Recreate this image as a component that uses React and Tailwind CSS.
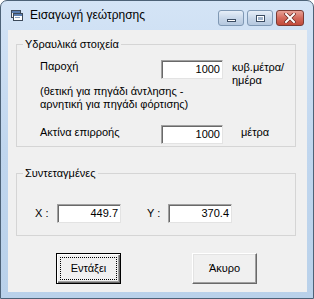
import React from 'react';

// Sunken edit box, classic Windows look
const Field = ({ value, w }) => (
  <div
    className={`${w} h-[19px] shrink-0 flex items-center justify-end pr-[2px] bg-white border border-t-[#a0a0a0] border-l-[#a0a0a0] border-b-[#e3e3e3] border-r-[#e3e3e3] shadow-[inset_1px_1px_0_#696969] text-[11px] leading-none`}
  >
    {value}
  </div>
);

const CaptionButton = ({ children, close }) => (
  <div
    className={
      close
        ? 'w-[28px] h-[16px] rounded-[3px] border border-[#7a3a33] bg-gradient-to-b from-[#e7a196] via-[#d46a5c] to-[#c14a3a] flex items-center justify-center'
        : 'w-[26px] h-[16px] rounded-[3px] border border-[#7f98b4] bg-gradient-to-b from-[#e6eef8] via-[#c9d8ea] to-[#b5c8df] flex items-center justify-center'
    }
  >
    {children}
  </div>
);

export default function App() {
  return (
    <div className="w-[314px] h-[299px] flex flex-col rounded-t-[7px] border border-[#4d6277] bg-gradient-to-b from-[#d4e4f6] via-[#c0d6ee] to-[#b9d1ea] font-['Liberation_Sans',sans-serif] text-black">
      {/* title bar */}
      <div className="h-[29px] shrink-0 flex items-start pl-[10px] pr-[9px]">
        <div className="flex items-center gap-[7px] h-[28px]">
          <svg width="12" height="11" viewBox="0 0 12 11">
            <rect x="0.5" y="0.5" width="9" height="7" fill="#f4f4f4" stroke="#3d4a5a" />
            <rect x="1" y="1" width="8" height="2" fill="#5a7eb0" />
            <rect x="2.5" y="3.5" width="9" height="7" fill="#ffffff" stroke="#3d4a5a" />
            <rect x="3" y="4" width="8" height="2" fill="#5a7eb0" />
            <rect x="4" y="7" width="5" height="1" fill="#8da3bd" />
          </svg>
          <span className="text-[12px] leading-none text-black">Εισαγωγή γεώτρησης</span>
        </div>
        <div className="ml-auto flex gap-[3px] mt-[9px]">
          <CaptionButton>
            <div className="w-[9px] h-[3px] mt-[5px] bg-white border border-[#3c4d63]" />
          </CaptionButton>
          <CaptionButton>
            <div className="w-[9px] h-[7px] bg-white border border-[#3c4d63] flex items-center justify-center">
              <div className="w-[5px] h-[3px] bg-[#9fb3cb]" />
            </div>
          </CaptionButton>
          <CaptionButton close>
            <svg width="12" height="10" viewBox="0 0 12 10">
              <path d="M2 1 L10 9 M10 1 L2 9" stroke="#6b2b24" strokeWidth="3.4" strokeLinecap="square" />
              <path d="M2 1 L10 9 M10 1 L2 9" stroke="#ffffff" strokeWidth="2" strokeLinecap="square" />
            </svg>
          </CaptionButton>
        </div>
      </div>

      {/* client area */}
      <div className="flex-1 ml-[7px] mr-[6px] mb-[6px] bg-[#f0f0f0] flex flex-col text-[11px] leading-[13px]">
        <fieldset className="ml-[8px] mt-[8px] w-[280px] h-[109px] border border-[#d5d5d5] flex flex-col">
          <legend className="ml-[6px] px-[2px] leading-[13px]">Υδραυλικά στοιχεία</legend>
          <div className="mt-[9px] h-[19px] flex items-start pl-[23px]">
            <span className="w-[121px] shrink-0">Παροχή</span>
            <Field value="1000" w="w-[62px]" />
            <span className="ml-[9px] mt-[1px] whitespace-nowrap">
              κυβ.μέτρα/
              <br />
              ημέρα
            </span>
          </div>
          <p className="mt-[6px] pl-[23px]">
            (θετική για πηγάδι άντλησης -
            <br />
            αρνητική για πηγάδι φόρτισης)
          </p>
          <div className="mt-[14px] h-[19px] flex items-start pl-[23px]">
            <span className="w-[121px] shrink-0 mt-[1px]">Ακτίνα επιρροής</span>
            <Field value="1000" w="w-[62px]" />
            <span className="ml-[18px] mt-[1px]">μέτρα</span>
          </div>
        </fieldset>

        <fieldset className="ml-[8px] mt-[20px] w-[280px] h-[69px] border border-[#d5d5d5] flex flex-col">
          <legend className="ml-[6px] px-[2px] leading-[13px]">Συντεταγμένες</legend>
          <div className="mt-[24px] flex items-center pl-[18px]">
            <span className="w-[22px] shrink-0">X :</span>
            <Field value="449.7" w="w-[64px]" />
            <span className="ml-[26px] w-[21px] shrink-0">Y :</span>
            <Field value="370.4" w="w-[64px]" />
          </div>
        </fieldset>

        <div className="mt-[17px] flex pl-[48px]">
          <button className="w-[65px] h-[31px] p-[3px] border border-black bg-[#f0f0f0] shadow-[inset_1px_1px_0_#ffffff,inset_-1px_-1px_0_#696969,inset_-2px_-2px_0_#a0a0a0]">
            <div className="w-full h-full border border-dotted border-black flex items-center justify-center text-[11px]">
              Εντάξει
            </div>
          </button>
          <button className="ml-[71px] w-[65px] h-[31px] border border-t-white border-l-white border-b-[#696969] border-r-[#696969] bg-[#f0f0f0] shadow-[inset_-1px_-1px_0_#a0a0a0,inset_1px_1px_0_#e3e3e3] flex items-center justify-center text-[11px]">
            Άκυρο
          </button>
        </div>
      </div>
    </div>
  );
}
